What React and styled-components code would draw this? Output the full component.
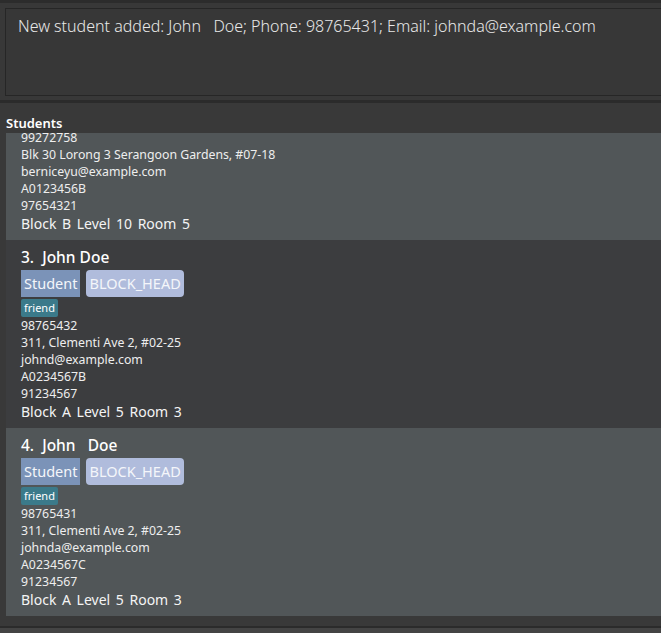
import React, { useLayoutEffect, useRef } from "react";
import styled, { createGlobalStyle } from "styled-components";

const Global = createGlobalStyle`
  html, body { margin: 0; padding: 0; background: #383838; }
  body { font-family: "Noto Sans", "Open Sans", sans-serif; overflow: hidden; }
  #root { width: 661px; height: 633px; }
`;

const Window = styled.div`
  width: 661px;
  height: 633px;
  display: flex;
  flex-direction: column;
  background: #383838;
  border-top: 3px solid #2c2c2c;
  box-sizing: border-box;
  overflow: hidden;
`;

const ResultPane = styled.div`
  height: 97px;
  flex: none;
  padding: 5px 0 4px 5px;
  box-sizing: border-box;
  display: flex;
`;

const ResultBox = styled.div`
  flex: 1;
  margin-right: -10px;
  border: 1px solid #262626;
  background: #373737;
  padding: 6px 12px;
  color: #e8e8e8;
  font-size: 16px;
  font-weight: 300;
  white-space: pre;
`;

const Divider = styled.div`
  height: 3px;
  background: #2b2b2b;
  flex: none;
`;

const ListPane = styled.div`
  flex: 1;
  min-height: 0;
  display: flex;
  flex-direction: column;
  background: #393939;
  padding: 12px 0 10px 6px;
`;

const PaneTitle = styled.div`
  color: #ffffff;
  font-size: 13px;
  font-weight: 600;
  height: 17px;
  line-height: 16px;
  margin-bottom: 1px;
`;

const Viewport = styled.div`
  flex: 1;
  min-height: 0;
  overflow-y: scroll;
  scrollbar-width: none;
  &::-webkit-scrollbar { display: none; }
`;

const Card = styled.div`
  background: ${(p) => (p.$alt ? "#3c3d3f" : "#515658")};
  padding: 7px 15px 6px 15px;
  display: flex;
  flex-direction: column;
  color: #f0f0f0;
`;

const Name = styled.div`
  font-size: 15.5px;
  font-weight: 500;
  line-height: 20px;
  color: #ffffff;
  white-space: pre;
`;

const RoleRow = styled.div`
  display: flex;
  gap: 6px;
  margin-top: 3px;
`;

const Role = styled.span`
  font-size: 14.5px;
  line-height: 27px;
  height: 27px;
  padding: 0 3px;
  color: #f4f6fa;
  background: ${(p) => (p.$head ? "#b0bcdc" : "#7b93b8")};
  border-radius: ${(p) => (p.$head ? "4px" : "0")};
`;

const TagRow = styled.div`
  display: flex;
  gap: 4px;
  margin-top: 2px;
`;

const Tag = styled.span`
  font-size: 11px;
  line-height: 18px;
  height: 18px;
  padding: 0 3px;
  color: #ffffff;
  background: #3b7a8a;
  border-radius: 2px;
`;

const Line = styled.div`
  font-size: 12.3px;
  line-height: 17px;
  color: #eeeeee;
  white-space: pre;
`;

const Room = styled.div`
  font-size: 14px;
  line-height: 20px;
  color: #f4f4f4;
  word-spacing: 2px;
`;

const BottomDivider = styled.div`
  height: 2px;
  flex: none;
  background: #2b2b2b;
`;

const StatusStrip = styled.div`
  height: 5px;
  flex: none;
  background: #444444;
`;

const students = [
  {
    name: "Alex Yeoh",
    phone: "87438807",
    address: "Blk 30 Geylang Street 29, #06-40",
    email: "alexyeoh@example.com",
    id: "A0123455A",
    emergency: "91234560",
    room: "Block A  Level 2  Room 1",
  },
  {
    name: "Bernice Yu",
    phone: "99272758",
    address: "Blk 30 Lorong 3 Serangoon Gardens, #07-18",
    email: "berniceyu@example.com",
    id: "A0123456B",
    emergency: "97654321",
    room: "Block B  Level 10  Room 5",
  },
  {
    name: "John Doe",
    phone: "98765432",
    address: "311, Clementi Ave 2, #02-25",
    email: "johnd@example.com",
    id: "A0234567B",
    emergency: "91234567",
    room: "Block A  Level 5  Room 3",
  },
  {
    name: "John   Doe",
    phone: "98765431",
    address: "311, Clementi Ave 2, #02-25",
    email: "johnda@example.com",
    id: "A0234567C",
    emergency: "91234567",
    room: "Block A  Level 5  Room 3",
  },
];

function StudentCard({ s, index }) {
  return (
    <Card $alt={index % 2 === 1}>
      <Name>{`${index}.  ${s.name}`}</Name>
      <RoleRow>
        <Role>Student</Role>
        <Role $head>BLOCK_HEAD</Role>
      </RoleRow>
      <TagRow>
        <Tag>friend</Tag>
      </TagRow>
      <Line>{s.phone}</Line>
      <Line>{s.address}</Line>
      <Line>{s.email}</Line>
      <Line>{s.id}</Line>
      <Line>{s.emergency}</Line>
      <Room>{s.room}</Room>
    </Card>
  );
}

export default function App() {
  const ref = useRef(null);
  useLayoutEffect(() => {
    if (ref.current) ref.current.scrollTop = ref.current.scrollHeight;
  }, []);
  return (
    <>
      <Global />
      <Window>
        <ResultPane>
          <ResultBox>New student added: John   Doe; Phone: 98765431; Email: johnda@example.com</ResultBox>
        </ResultPane>
        <Divider />
        <ListPane>
          <PaneTitle>Students</PaneTitle>
          <Viewport ref={ref}>
            {students.map((s, i) => (
              <StudentCard key={i} s={s} index={i + 1} />
            ))}
          </Viewport>
        </ListPane>
        <BottomDivider />
        <StatusStrip />
      </Window>
    </>
  );
}
